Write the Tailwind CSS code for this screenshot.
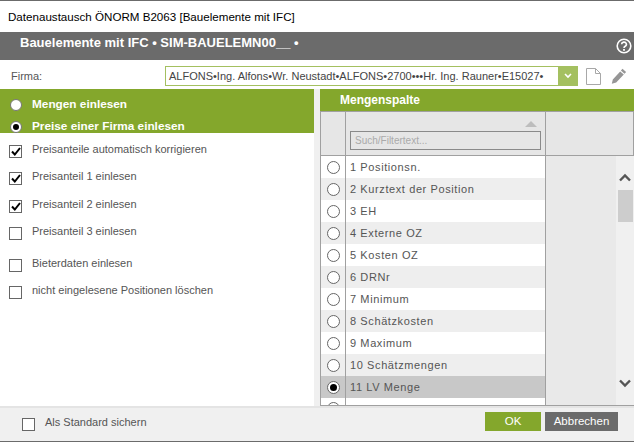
<!DOCTYPE html>
<html lang="de">
<head>
    <meta charset="UTF-8">
    <title>Datenaustausch ÖNORM B2063</title>
    <script src="https://cdn.jsdelivr.net/npm/@tailwindcss/browser@4"></script>
</head>
<body class="bg-white font-['Liberation_Sans',sans-serif] overflow-hidden">
<div class="w-[634px] h-[442px] flex flex-col border-t border-b border-[#6b6b6b] overflow-hidden">

    <!-- Titel -->
    <div class="h-[31px] shrink-0 pl-2 flex items-center text-[11.6px] text-black">Datenaustausch ÖNORM B2063 [Bauelemente mit IFC]</div>

    <!-- Kopfzeile -->
    <div class="h-[28px] shrink-0 bg-[#6b6b6b] pl-5 pr-[2px] flex items-center justify-between text-white">
        <span class="mb-[6px] text-[13px] font-bold">Bauelemente mit IFC • SIM-BAUELEMN00__ •</span>
        <svg width="16" height="16" viewBox="0 0 16 16" fill="none">
            <circle cx="8" cy="8" r="6.8" stroke="white" stroke-width="1.6"/>
            <path d="M5.6 6.3a2.4 2.2 0 1 1 3.6 1.9c-.8.5-1.2.9-1.2 1.8" stroke="white" stroke-width="1.6"/>
            <rect x="7.1" y="11" width="1.8" height="1.8" fill="white"/>
        </svg>
    </div>

    <!-- Firma -->
    <div class="h-[28px] shrink-0 flex items-center pl-[11px] pt-[4px]">
        <span class="w-[154px] text-[11px] text-[#555]">Firma:</span>
        <div class="w-[413px] h-5 border border-[#a4c060] flex items-center justify-between pl-[3px]">
            <span class="text-[11px] text-[#444] whitespace-nowrap">ALFONS•Ing. Alfons•Wr. Neustadt•ALFONS•2700•••Hr. Ing. Rauner•E15027•</span>
            <span class="w-[19px] h-5 bg-[#a4c060] flex items-center justify-center shrink-0">
                <svg width="8" height="6" viewBox="0 0 8 6" fill="none"><path d="M1 1l3 3 3-3" stroke="white" stroke-width="1.6"/></svg>
            </span>
        </div>
        <svg class="ml-2 shrink-0" width="15" height="17" viewBox="0 0 15 17" fill="none">
            <path d="M.5 .5h9l5 5v11H.5z M9.5 .5v5h5" stroke="#a8a8a8" stroke-width="1"/>
        </svg>
        <svg class="ml-[10px] shrink-0" width="16" height="16" viewBox="0 0 16 16" fill="#969696">
            <path d="M11.5 .8l3.6 3.2-1.6 1.8-3.6-3.2z M9.2 3.4l3.6 3.2-7.6 8-4.4 1.2 1-4.4z"/>
        </svg>
    </div>

    <!-- Hauptbereich -->
    <div class="h-[317px] shrink-0 mt-px flex bg-[#f0f0f0]">
        <div class="w-[314px] bg-white shrink-0">
            <div class="h-[44px] bg-[#84a72c] pl-[10px] pt-[5px] overflow-hidden text-[11.8px] font-bold text-white">
                <div class="h-[22px] flex items-center gap-[10px]">
                    <span class="w-3 h-3 rounded-full bg-white border border-[#777]"></span>
                    <span>Mengen einlesen</span>
                </div>
                <div class="h-[22px] flex items-center gap-[10px]">
                    <span class="w-3 h-3 rounded-full bg-white border border-[#777] flex items-center justify-center"><span class="w-1.5 h-1.5 rounded-full bg-black"></span></span>
                    <span>Preise einer Firma einlesen</span>
                </div>
            </div>
            <div class="pl-[9px] pt-[7px] text-[11px] text-[#555]">
                <label class="h-[27px] flex gap-[10px]">
                    <span class="mt-[5px] w-[13px] h-[13px] border border-[#666] flex items-center justify-center"><svg width="10" height="9" viewBox="0 0 10 9" fill="none"><path d="M1 4.5l2.8 3L9 1" stroke="black" stroke-width="2"/></svg></span>
                    <span class="mt-px">Preisanteile automatisch korrigieren</span>
                </label>
                <label class="h-[28px] flex gap-[10px]">
                    <span class="mt-[5px] w-[13px] h-[13px] border border-[#666] flex items-center justify-center"><svg width="10" height="9" viewBox="0 0 10 9" fill="none"><path d="M1 4.5l2.8 3L9 1" stroke="black" stroke-width="2"/></svg></span>
                    <span class="mt-px">Preisanteil 1 einlesen</span>
                </label>
                <label class="h-[27px] flex gap-[10px]">
                    <span class="mt-[5px] w-[13px] h-[13px] border border-[#666] flex items-center justify-center"><svg width="10" height="9" viewBox="0 0 10 9" fill="none"><path d="M1 4.5l2.8 3L9 1" stroke="black" stroke-width="2"/></svg></span>
                    <span class="mt-px">Preisanteil 2 einlesen</span>
                </label>
                <label class="h-[32px] flex gap-[10px]">
                    <span class="mt-[5px] w-[13px] h-[13px] border border-[#666]"></span>
                    <span class="mt-px">Preisanteil 3 einlesen</span>
                </label>
                <label class="h-[27px] flex gap-[10px]">
                    <span class="mt-[5px] w-[13px] h-[13px] border border-[#666]"></span>
                    <span class="mt-px">Bieterdaten einlesen</span>
                </label>
                <label class="h-[27px] flex gap-[10px]">
                    <span class="mt-[5px] w-[13px] h-[13px] border border-[#666]"></span>
                    <span class="mt-px">nicht eingelesene Positionen löschen</span>
                </label>
            </div>
        </div>

        <!-- Mengenspalte -->
        <div class="ml-[6px] w-[314px] flex flex-col border-b border-[#a0a0a0]">
            <div class="h-[22px] shrink-0 bg-[#84a72c] pl-5 flex items-center text-xs font-bold text-white">Mengenspalte</div>
            <div class="h-[45px] shrink-0 flex bg-[#e6e6e6] border-y border-l border-[#a0a0a0]">
                <div class="w-[25px] border-r border-[#a0a0a0]"></div>
                <div class="w-[200px] border-r border-[#a0a0a0] px-[4px] pt-[9px] flex flex-col items-end">
                    <div class="w-0 h-0 mr-[4px] mb-[4px] border-x-[6px] border-x-transparent border-b-[6px] border-b-[#bdbdbd]"></div>
                    <div class="w-full h-[19px] border border-[#8a8a8a] pl-[4px] flex items-center text-[10px] text-[#aaa]">Such/Filtertext...</div>
                </div>
                <div class="flex-1 border-r border-[#a0a0a0]"></div>
            </div>
            <div class="flex-1 min-h-0 flex overflow-hidden">
                <div class="w-[226px] shrink-0 border-l border-r border-[#a0a0a0] text-[11px] tracking-[0.6px] text-[#555]">
                    <div class="h-[22px] flex bg-white"><span class="w-[25px] border-r border-[#a0a0a0] flex items-center justify-center"><span class="w-[13px] h-[13px] rounded-full bg-white border border-[#666]"></span></span><span class="pl-[4px] flex items-center">1 Positionsn.</span></div>
                    <div class="h-[22px] flex bg-[#eeeeee]"><span class="w-[25px] border-r border-[#a0a0a0] flex items-center justify-center"><span class="w-[13px] h-[13px] rounded-full bg-white border border-[#666]"></span></span><span class="pl-[4px] flex items-center">2 Kurztext der Position</span></div>
                    <div class="h-[22px] flex bg-white"><span class="w-[25px] border-r border-[#a0a0a0] flex items-center justify-center"><span class="w-[13px] h-[13px] rounded-full bg-white border border-[#666]"></span></span><span class="pl-[4px] flex items-center">3 EH</span></div>
                    <div class="h-[22px] flex bg-[#eeeeee]"><span class="w-[25px] border-r border-[#a0a0a0] flex items-center justify-center"><span class="w-[13px] h-[13px] rounded-full bg-white border border-[#666]"></span></span><span class="pl-[4px] flex items-center">4 Externe OZ</span></div>
                    <div class="h-[22px] flex bg-white"><span class="w-[25px] border-r border-[#a0a0a0] flex items-center justify-center"><span class="w-[13px] h-[13px] rounded-full bg-white border border-[#666]"></span></span><span class="pl-[4px] flex items-center">5 Kosten OZ</span></div>
                    <div class="h-[22px] flex bg-[#eeeeee]"><span class="w-[25px] border-r border-[#a0a0a0] flex items-center justify-center"><span class="w-[13px] h-[13px] rounded-full bg-white border border-[#666]"></span></span><span class="pl-[4px] flex items-center">6 DRNr</span></div>
                    <div class="h-[22px] flex bg-white"><span class="w-[25px] border-r border-[#a0a0a0] flex items-center justify-center"><span class="w-[13px] h-[13px] rounded-full bg-white border border-[#666]"></span></span><span class="pl-[4px] flex items-center">7 Minimum</span></div>
                    <div class="h-[22px] flex bg-[#eeeeee]"><span class="w-[25px] border-r border-[#a0a0a0] flex items-center justify-center"><span class="w-[13px] h-[13px] rounded-full bg-white border border-[#666]"></span></span><span class="pl-[4px] flex items-center">8 Schätzkosten</span></div>
                    <div class="h-[22px] flex bg-white"><span class="w-[25px] border-r border-[#a0a0a0] flex items-center justify-center"><span class="w-[13px] h-[13px] rounded-full bg-white border border-[#666]"></span></span><span class="pl-[4px] flex items-center">9 Maximum</span></div>
                    <div class="h-[22px] flex bg-[#eeeeee]"><span class="w-[25px] border-r border-[#a0a0a0] flex items-center justify-center"><span class="w-[13px] h-[13px] rounded-full bg-white border border-[#666]"></span></span><span class="pl-[4px] flex items-center">10 Schätzmengen</span></div>
                    <div class="h-[22px] flex bg-[#c8c8c8]"><span class="w-[25px] border-r border-[#a0a0a0] flex items-center justify-center"><span class="w-[13px] h-[13px] rounded-full bg-white border border-[#666] flex items-center justify-center"><span class="w-[7px] h-[7px] rounded-full bg-black"></span></span></span><span class="pl-[4px] flex items-center">11 LV Menge</span></div>
                    <div class="h-[22px] flex bg-white"><span class="w-[25px] border-r border-[#a0a0a0] flex justify-center pt-1"><span class="w-[13px] h-[13px] rounded-full bg-white border border-[#666]"></span></span></div>
                </div>
                <div class="w-[70px] shrink-0 bg-[#e9e9e9]"></div>
                <div class="w-[18px] shrink-0 bg-[#f0f0f0] flex flex-col items-center pt-[17px] pb-[17px]">
                    <svg width="12" height="9" viewBox="0 0 12 9" fill="none"><path d="M1 7.5l5-5 5 5" stroke="#555" stroke-width="2.4"/></svg>
                    <div class="mt-[8px] w-[15px] h-[32px] bg-[#cdcdcd]"></div>
                    <svg class="mt-auto" width="12" height="9" viewBox="0 0 12 9" fill="none"><path d="M1 1.5l5 5 5-5" stroke="#555" stroke-width="2.4"/></svg>
                </div>
            </div>
        </div>
    </div>

    <!-- Fusszeile -->
    <div class="flex-1 bg-[#f0f0f0] border-t-2 border-[#e4e4e4] flex items-center pl-[22px] pr-4 text-[11px] text-[#555]">
        <span class="w-[13px] h-[13px] bg-white border border-[#666]"></span>
        <span class="ml-[10px] mb-[4px]">Als Standard sichern</span>
        <button class="ml-auto mb-[6px] w-14 h-[19px] bg-[#84a72c] text-white text-[11.5px]">OK</button>
        <button class="ml-1 mb-[6px] w-[73px] h-[19px] bg-[#6b6b6b] text-white text-[11.5px]">Abbrechen</button>
    </div>
</div>
</body>
</html>
